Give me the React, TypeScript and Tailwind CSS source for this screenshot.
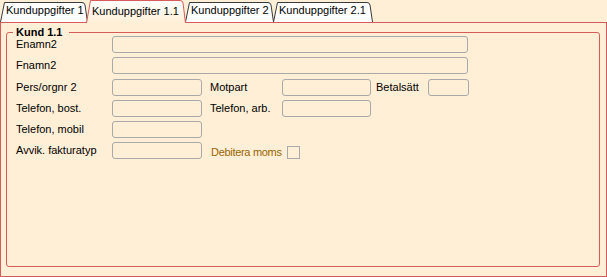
import React from "react"

type TabProps = { label: string; width: number; selected?: boolean; className?: string }

function Tab({ label, width, selected, className }: TabProps) {
  const h = selected ? 23 : 22
  const top = selected ? 0.5 : 2.5
  const d = `M0.5,${h} L4.5,${top} L${width - 6},${top} Q${width - 3.5},${top} ${width - 3},${top + 2.5} L${width - 0.5},${h}`
  return (
    <div
      className={`relative h-[22px] shrink-0 ${selected ? "z-10" : ""} ${className ?? ""}`}
      style={{ width }}
    >
      <svg className="absolute left-0 top-0 overflow-visible" width={width} height={h}>
        <defs>
          <linearGradient id="selTab" x1="0" y1="0" x2="0" y2="1">
            <stop offset="0" stopColor="#ffffff" />
            <stop offset="1" stopColor="#ffefd6" />
          </linearGradient>
        </defs>
        <path
          d={d}
          fill={selected ? "url(#selTab)" : "#ffffff"}
          stroke={selected ? "#d65b5b" : "#3a3a3a"}
          strokeWidth="1"
        />
      </svg>
      <span
        className={`relative block whitespace-nowrap text-[11px] leading-[13px] text-black ${
          selected ? "pl-[6px] pt-[5px]" : "pl-[6px] pt-[4px]"
        }`}
      >
        {label}
      </span>
    </div>
  )
}

function Field({ className }: { className: string }) {
  return <div className={`h-[17px] shrink-0 rounded-[3px] border border-[#a9a9a9] ${className}`} />
}

function Label({ text, className }: { text: string; className: string }) {
  return <span className={`shrink-0 whitespace-nowrap text-[11px] leading-[13px] text-black ${className}`}>{text}</span>
}

export default function App() {
  return (
    <div className="flex h-[277px] w-[607px] flex-col bg-[#ffefd6] font-['Liberation_Sans',Arial,sans-serif]">
      {/* tabs */}
      <div className="flex h-[22px] items-start">
        <Tab label="Kunduppgifter 1" width={88} />
        <Tab label="Kunduppgifter 1.1" width={100} selected className="-ml-[2px]" />
        <Tab label="Kunduppgifter 2" width={89} className="-ml-[1px]" />
        <Tab label="Kunduppgifter 2.1" width={100} className="-ml-[1px]" />
      </div>

      {/* panel */}
      <div className="flex h-[255px] flex-col border border-[#d65b5b]">
        <div className="relative ml-[5px] mr-[6px] mt-[9px] mb-[9px] flex flex-1 flex-col gap-[4.25px] rounded-[3px] border border-[#d65b5b] pl-[9px] pt-[3px]">
          <span className="absolute -top-[7px] left-[6px] bg-[#ffefd6] pl-[3px] pr-[7px] text-[11px] font-bold leading-[13px] text-black">
            Kund 1.1
          </span>

          <div className="flex h-[17px] items-center">
            <Label text="Enamn2" className="w-[96px]" />
            <Field className="w-[356px]" />
          </div>

          <div className="flex h-[17px] items-center">
            <Label text="Fnamn2" className="w-[96px]" />
            <Field className="w-[356px]" />
          </div>

          <div className="flex h-[17px] items-center">
            <Label text="Pers/orgnr 2" className="w-[96px]" />
            <Field className="w-[90px]" />
            <Label text="Motpart" className="ml-[8px] w-[72px]" />
            <Field className="w-[89px]" />
            <Label text="Betalsätt" className="ml-[5px] w-[52px]" />
            <Field className="w-[41px]" />
          </div>

          <div className="flex h-[17px] items-center">
            <Label text="Telefon, bost." className="w-[96px]" />
            <Field className="w-[90px]" />
            <Label text="Telefon, arb." className="ml-[8px] w-[72px]" />
            <Field className="w-[89px]" />
          </div>

          <div className="flex h-[17px] items-center">
            <Label text="Telefon, mobil" className="w-[96px]" />
            <Field className="w-[90px]" />
          </div>

          <div className="flex h-[17px] items-center">
            <Label text="Avvik. fakturatyp" className="w-[96px]" />
            <Field className="w-[90px]" />
            <div className="ml-[9px] flex h-[13px] items-center self-end">
              <span className="w-[76px] whitespace-nowrap text-[11px] leading-[13px] tracking-[-0.3px] text-[#9a6400]">
                Debitera moms
              </span>
              <div className="h-[13px] w-[13px] border border-[#aaaaaa]" />
            </div>
          </div>
        </div>
      </div>
    </div>
  )
}
